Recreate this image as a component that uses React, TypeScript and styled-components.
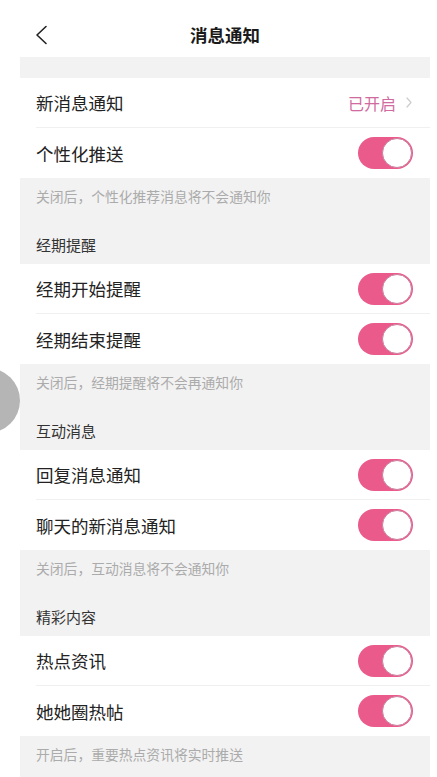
import React from "react";
import styled, { createGlobalStyle } from "styled-components";

interface Item {
    label: string;
    on?: boolean;
    value?: string;
}

interface Group {
    title?: string;
    items: Item[];
    hint: string;
}

const GlobalStyle = createGlobalStyle`
    * { box-sizing: border-box; }
    html, body {
        margin: 0;
        padding: 0;
        background: #ffffff;
        font-family: "Noto Sans CJK SC", "Noto Sans", sans-serif;
        color: #222222;
    }
`;

const Page = styled.div`
    width: 437px;
    min-height: 777px;
    background: #ffffff;
    padding: 0 7px 0 20px;
    overflow: hidden;
`;

const Header = styled.div`
    height: 57px;
    padding-top: 12px;
    display: grid;
    grid-template-columns: 60px 1fr 60px;
    align-items: center;
`;

const Back = styled.div`
    padding-left: 14px;
    display: flex;
    align-items: center;
    height: 45px;
`;

const Title = styled.div`
    text-align: center;
    font-size: 17.5px;
    font-weight: 700;
    color: #1a1a1a;
    line-height: 45px;
`;

const Spacer = styled.div`
    height: 21px;
    background: #f2f2f2;
`;

const Row = styled.div`
    height: 50px;
    padding-left: 16px;
    background: #ffffff;
`;

const RowInner = styled.div<{ $divider: boolean }>`
    height: 100%;
    display: flex;
    align-items: center;
    justify-content: space-between;
    padding-right: 17px;
    border-bottom: ${({ $divider }) => ($divider ? "1px solid #f0f0f0" : "none")};
`;

const Label = styled.span`
    font-size: 17.5px;
    color: #222222;
`;

const Value = styled.span`
    display: flex;
    align-items: center;
    gap: 10px;
    font-size: 16px;
    color: #d06ba0;
    padding-right: 1px;
`;

const Switch = styled.div<{ $on: boolean }>`
    width: 55px;
    height: 32px;
    border-radius: 16px;
    background: ${({ $on }) => ($on ? "#ea5a8b" : "#e5e5e5")};
    position: relative;
    flex-shrink: 0;
`;

const Knob = styled.div<{ $on: boolean }>`
    position: absolute;
    top: 1px;
    left: ${({ $on }) => ($on ? "24px" : "1px")};
    width: 30px;
    height: 30px;
    border-radius: 50%;
    background: #ffffff;
    border: 1px solid #c97f9e;
`;

const GrayBlock = styled.div`
    background: #f2f2f2;
    padding: 9px 16px 9px;
`;

const Hint = styled.div`
    font-size: 13.8px;
    line-height: 18px;
    color: #ababab;
`;

const SectionTitle = styled.div`
    margin-top: 30px;
    font-size: 15px;
    line-height: 20px;
    color: #333333;
`;

const Footer = styled.div`
    background: #f2f2f2;
    padding: 9px 16px 30px;
`;

const FloatBall = styled.div`
    position: fixed;
    left: -45px;
    top: 368px;
    width: 65px;
    height: 65px;
    border-radius: 50%;
    background: #b5b5b5;
`;

const BackIcon = () => (
    <svg width="14" height="20" viewBox="0 0 14 20" fill="none">
        <path d="M12 1.5 3 10l9 8.5" stroke="#222" strokeWidth="1.6" strokeLinecap="round" strokeLinejoin="round" />
    </svg>
);

const ChevronIcon = () => (
    <svg width="6" height="11" viewBox="0 0 6 11" fill="none">
        <path d="M1 1l4 4.5L1 10" stroke="#cccccc" strokeWidth="1.2" strokeLinecap="round" strokeLinejoin="round" />
    </svg>
);

const groups: Group[] = [
    {
        items: [
            { label: "新消息通知", value: "已开启" },
            { label: "个性化推送", on: true },
        ],
        hint: "关闭后，个性化推荐消息将不会通知你",
    },
    {
        title: "经期提醒",
        items: [
            { label: "经期开始提醒", on: true },
            { label: "经期结束提醒", on: true },
        ],
        hint: "关闭后，经期提醒将不会再通知你",
    },
    {
        title: "互动消息",
        items: [
            { label: "回复消息通知", on: true },
            { label: "聊天的新消息通知", on: true },
        ],
        hint: "关闭后，互动消息将不会通知你",
    },
    {
        title: "精彩内容",
        items: [
            { label: "热点资讯", on: true },
            { label: "她她圈热帖", on: true },
        ],
        hint: "开启后，重要热点资讯将实时推送",
    },
];

const App: React.FC = () => {
    return (
        <>
            <GlobalStyle />
            <Page>
                <Header>
                    <Back>
                        <BackIcon />
                    </Back>
                    <Title>消息通知</Title>
                    <div />
                </Header>
                <Spacer />
                {groups.map((group, index) => {
                    const next = groups[index + 1];
                    return (
                        <React.Fragment key={index}>
                            {group.items.map((item, itemIndex) => (
                                <Row key={itemIndex}>
                                    <RowInner $divider={itemIndex < group.items.length - 1}>
                                        <Label>{item.label}</Label>
                                        {item.value ? (
                                            <Value>
                                                {item.value}
                                                <ChevronIcon />
                                            </Value>
                                        ) : (
                                            <Switch $on={!!item.on}>
                                                <Knob $on={!!item.on} />
                                            </Switch>
                                        )}
                                    </RowInner>
                                </Row>
                            ))}
                            {next ? (
                                <GrayBlock>
                                    <Hint>{group.hint}</Hint>
                                    <SectionTitle>{next.title}</SectionTitle>
                                </GrayBlock>
                            ) : (
                                <Footer>
                                    <Hint>{group.hint}</Hint>
                                </Footer>
                            )}
                        </React.Fragment>
                    );
                })}
                <FloatBall />
            </Page>
        </>
    );
};

export default App;
